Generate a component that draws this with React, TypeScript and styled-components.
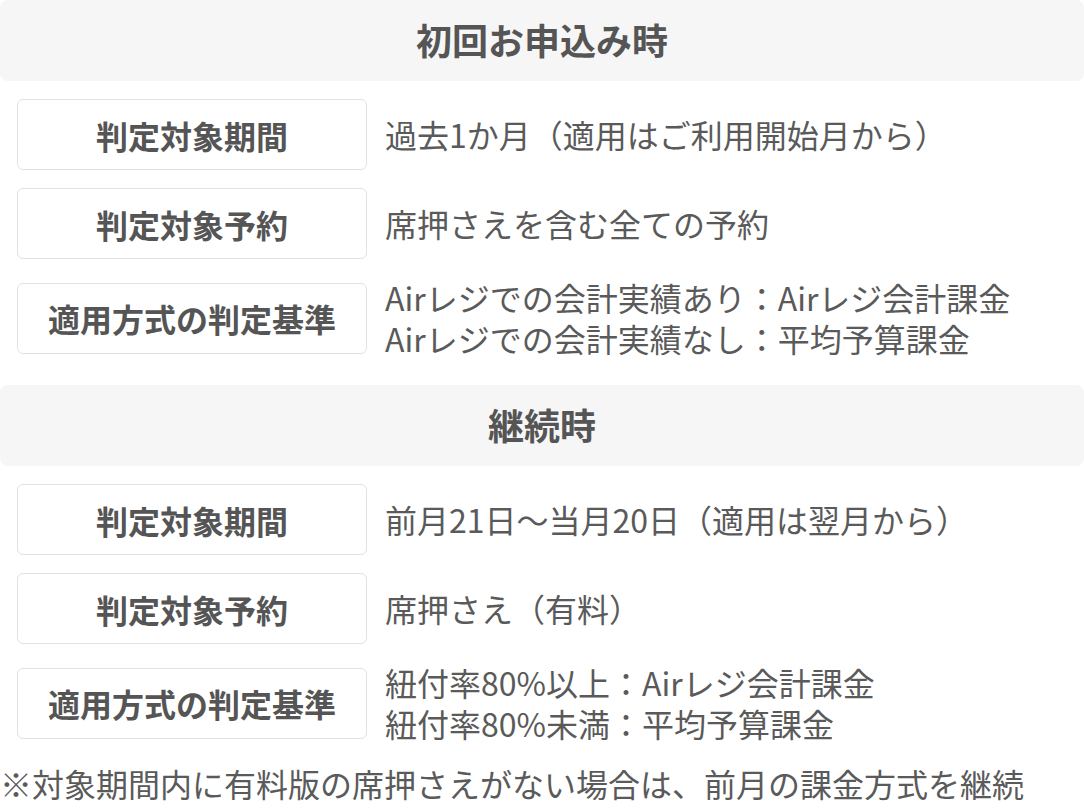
import styled, { createGlobalStyle } from "styled-components";

const GlobalStyle = createGlobalStyle`
  html, body {
    margin: 0;
    padding: 0;
    background: #ffffff;
  }
  body {
    font-family: "Noto Sans CJK JP", "Noto Sans", sans-serif;
    color: #555555;
  }
`;

const Wrapper = styled.div`
  width: 1084px;
  display: flex;
  flex-direction: column;
`;

const Section = styled.section<{ last?: boolean }>`
  display: flex;
  flex-direction: column;
  gap: 18px;
  margin-bottom: ${(props) => (props.last ? "0" : "26px")};
`;

const SectionHeader = styled.h2`
  margin: 0;
  height: 81px;
  display: flex;
  align-items: center;
  justify-content: center;
  background-color: #f6f6f6;
  border-radius: 8px;
  font-size: 36px;
  font-weight: 700;
  line-height: 1;
  padding-bottom: 3px;
  box-sizing: border-box;
  color: #555555;
`;

const Row = styled.div`
  display: flex;
  align-items: center;
  gap: 18px;
  padding-left: 17px;
`;

const Label = styled.div`
  box-sizing: border-box;
  width: 350px;
  height: 71px;
  flex-shrink: 0;
  display: flex;
  align-items: center;
  justify-content: center;
  border: 1.5px solid #e2e2e2;
  border-radius: 6px;
  background: #ffffff;
  font-size: 32px;
  font-weight: 700;
  color: #555555;
`;

const Value = styled.div`
  display: flex;
  flex-direction: column;
  font-size: 32px;
  color: #5a5a5a;
`;

const Line = styled.div`
  line-height: 41px;
`;

const Note = styled.p`
  margin: 20px 0 0;
  font-size: 32px;
  line-height: 38px;
  color: #5a5a5a;
  white-space: nowrap;
`;

type Item = { label: string; lines: string[] };

const initial: Item[] = [
  { label: "判定対象期間", lines: ["過去1か月（適用はご利用開始月から）"] },
  { label: "判定対象予約", lines: ["席押さえを含む全ての予約"] },
  {
    label: "適用方式の判定基準",
    lines: [
      "Airレジでの会計実績あり：Airレジ会計課金",
      "Airレジでの会計実績なし：平均予算課金",
    ],
  },
];

const continuing: Item[] = [
  { label: "判定対象期間", lines: ["前月21日〜当月20日（適用は翌月から）"] },
  { label: "判定対象予約", lines: ["席押さえ（有料）"] },
  {
    label: "適用方式の判定基準",
    lines: ["紐付率80%以上：Airレジ会計課金", "紐付率80%未満：平均予算課金"],
  },
];

function Rows({ items }: { items: Item[] }) {
  return (
    <>
      {items.map((item) => (
        <Row key={item.label}>
          <Label>{item.label}</Label>
          <Value>
            {item.lines.map((line) => (
              <Line key={line}>{line}</Line>
            ))}
          </Value>
        </Row>
      ))}
    </>
  );
}

export default function App() {
  return (
    <Wrapper>
      <GlobalStyle />
      <Section>
        <SectionHeader>初回お申込み時</SectionHeader>
        <Rows items={initial} />
      </Section>
      <Section last>
        <SectionHeader>継続時</SectionHeader>
        <Rows items={continuing} />
      </Section>
      <Note>※対象期間内に有料版の席押さえがない場合は、前月の課金方式を継続</Note>
    </Wrapper>
  );
}
